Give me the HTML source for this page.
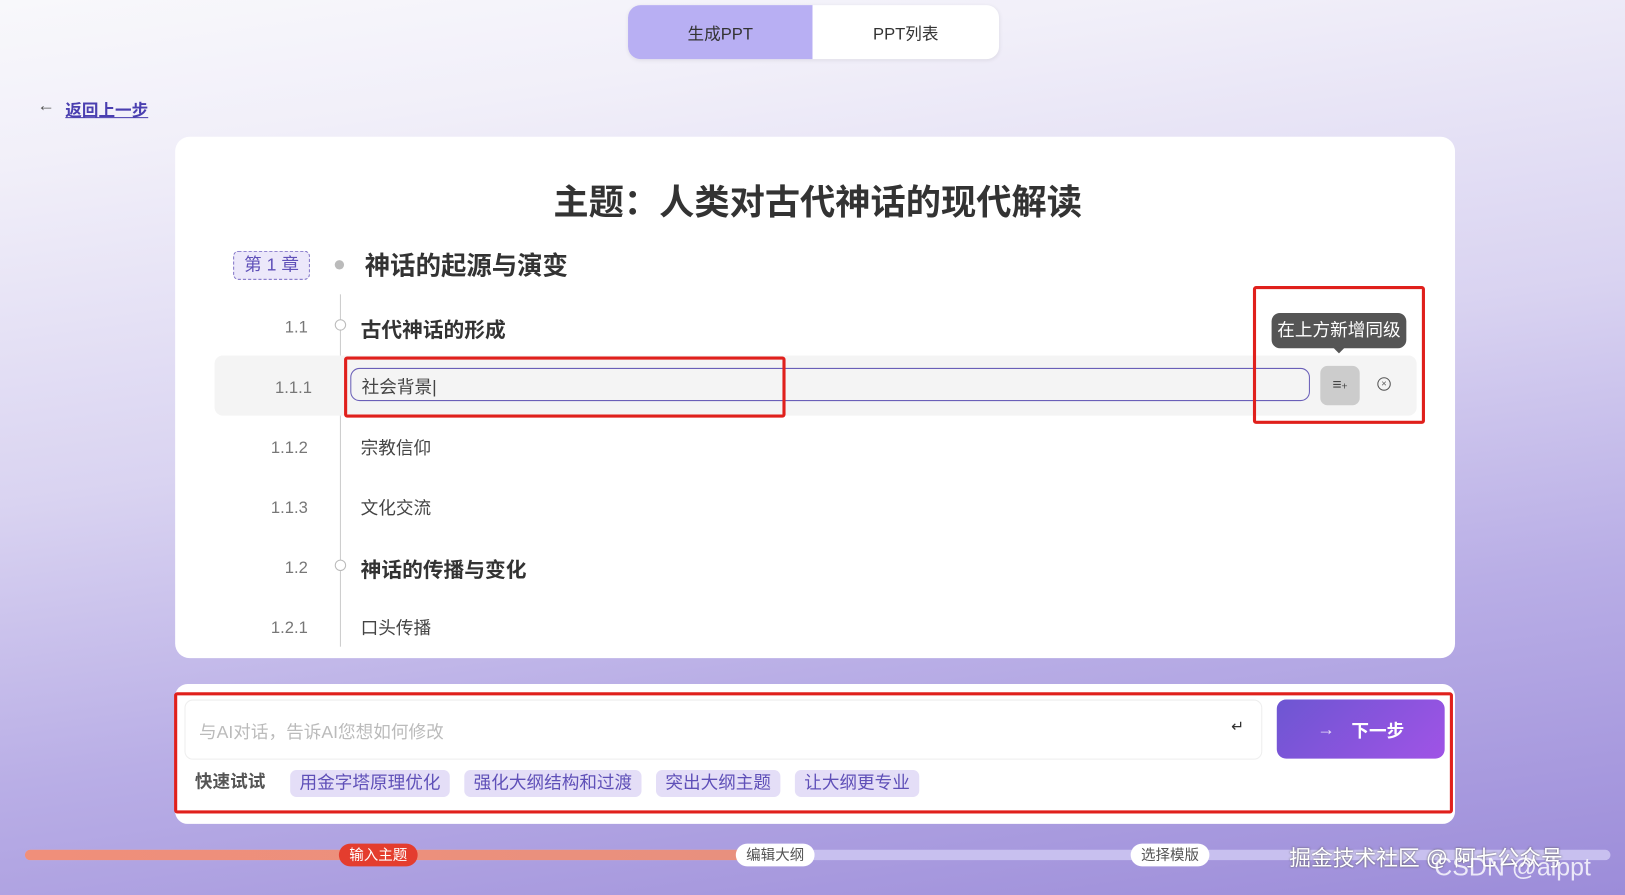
<!DOCTYPE html>
<html><head><meta charset="utf-8"><style>
html,body{margin:0;padding:0;width:1625px;height:895px;overflow:hidden}
body{font-family:"Liberation Sans","Noto Sans CJK SC",sans-serif;}
#w{position:absolute;left:0;top:0;width:1568px;height:864px;transform:scale(1.03635);transform-origin:0 0;
background:linear-gradient(172deg,#f8f8fb 0%,#f1eff9 15%,#d9d3f1 45%,#b9aee6 70%,#9c8cd9 100%);overflow:hidden;color:#333}
.a{position:absolute}
.tabs{left:606px;top:5px;width:358px;height:52px;background:#fff;border-radius:12px;box-shadow:0 1px 4px rgba(0,0,0,.08)}
.t1{left:0;top:0;width:178px;height:52px;background:#b8aff3;border-radius:12px 0 0 12px;display:flex;align-items:center;justify-content:center;font-size:16px;color:#333}
.t2{left:178px;top:0;width:180px;height:52px;display:flex;align-items:center;justify-content:center;font-size:16px;color:#333}
.card{left:169px;top:132px;width:1235px;height:503px;background:#fff;border-radius:14px;overflow:hidden}
.num{position:absolute;text-align:right;width:80px;font-size:16px;color:#777}
.txt{position:absolute;font-size:17px;color:#444}
.b{font-weight:bold;font-size:20px;color:#333}
.red{position:absolute;border:3px solid #e0201c;border-radius:3px}
.chip{display:inline-block;background:#e4def7;color:#5f50b8;border-radius:6px;padding:1px 9px;font-size:17px;margin-right:14px;line-height:24px}
</style></head><body><div id="w">
<div class="a tabs"><div class="a t1">生成PPT</div><div class="a t2">PPT列表</div></div>
<div class="a" style="left:36px;top:92px;font-size:17px;color:#555">←</div>
<div class="a" style="left:63px;top:93px;font-size:16px;color:#4a3fb0;text-decoration:underline;font-weight:bold">返回上一步</div>

<div class="a card">
 <div class="a" style="left:0;top:36px;width:1240px;text-align:center;font-size:34px;font-weight:bold;color:#333">主题：人类对古代神话的现代解读</div>
 <div class="a" style="left:56px;top:110px;width:72px;height:26px;border:1px dashed #7a6cc4;border-radius:5px;background:#ece8fa;color:#5f50b8;font-size:17px;text-align:center;line-height:26px">第 1 章</div>
 <div class="a" style="left:154px;top:119px;width:9px;height:9px;border-radius:50%;background:#bbb"></div>
 <div class="a" style="left:183px;top:106px;font-size:24.5px;font-weight:bold;color:#333">神话的起源与演变</div>
 <div class="a" style="left:159px;top:152px;width:1px;height:340px;background:#ccc"></div>
 <div class="a" style="left:38px;top:211px;width:1160px;height:58px;background:#f4f4f4;border-radius:8px"></div>
 <div class="num" style="left:48px;top:176px">1.1</div>
 <div class="a" style="left:154px;top:176px;width:9px;height:9px;border:1px solid #bbb;border-radius:50%;background:#fff"></div>
 <div class="txt b" style="left:179px;top:170px">古代神话的形成</div>
 <div class="num" style="left:52px;top:234px">1.1.1</div>
 <div class="a" style="left:169px;top:223px;width:924px;height:30px;border:1.5px solid #6a5fb8;border-radius:9px;background:#f4f4f4"></div>
 <div class="txt" style="left:180px;top:227px">社会背景|</div>
 <div class="a" style="left:1105px;top:221px;width:38px;height:38px;background:#ccc;border-radius:7px;font-size:15px;color:#444;text-align:center;line-height:38px">≡<span style="font-size:10px">+</span></div>
 <div class="a" style="left:1160px;top:232px;width:11px;height:11px;border:1.3px solid #555;border-radius:50%;font-size:9px;line-height:11px;text-align:center;color:#555">×</div>
 <div class="num" style="left:48px;top:292px">1.1.2</div>
 <div class="txt" style="left:179px;top:286px">宗教信仰</div>
 <div class="num" style="left:48px;top:350px">1.1.3</div>
 <div class="txt" style="left:179px;top:344px">文化交流</div>
 <div class="num" style="left:48px;top:408px">1.2</div>
 <div class="a" style="left:154px;top:408px;width:9px;height:9px;border:1px solid #bbb;border-radius:50%;background:#fff"></div>
 <div class="txt b" style="left:179px;top:402px">神话的传播与变化</div>
 <div class="num" style="left:48px;top:466px">1.2.1</div>
 <div class="txt" style="left:179px;top:460px">口头传播</div>
</div>
<div class="a" style="left:1227px;top:302px;width:130px;height:34px;background:#555;border-radius:8px;color:#fff;font-size:17px;text-align:center;line-height:34px">在上方新增同级</div>
<div class="a" style="left:1286px;top:335px;width:0;height:0;border-left:6px solid transparent;border-right:6px solid transparent;border-top:6px solid #555"></div>
<div class="red" style="left:1209px;top:276px;width:160px;height:127px"></div>
<div class="red" style="left:332px;top:344px;width:420px;height:53px"></div>

<div class="a" style="left:169px;top:660px;width:1235px;height:135px;background:#fff;border-radius:12px"></div>
<div class="a" style="left:178px;top:675px;width:1038px;height:56px;border:1px solid #eee;border-radius:8px;background:#fff"></div>
<div class="a" style="left:192px;top:692px;font-size:17px;color:#bbb">与AI对话，告诉AI您想如何修改</div>
<div class="a" style="left:1188px;top:692px;font-size:15px;color:#333">↵</div>
<div class="a" style="left:1232px;top:675px;width:162px;height:57px;border-radius:9px;background:linear-gradient(135deg,#6d56d2,#a053e6);color:#fff;font-size:17px;font-weight:bold;display:flex;align-items:center;justify-content:center"><span style="font-weight:normal;margin-right:16px;opacity:.8">→</span>下一步</div>
<div class="a" style="left:188px;top:743px;font-size:17px;font-weight:bold;color:#555;line-height:24px">快速试试</div>
<div class="a" style="left:280px;top:743px"><span class="chip">用金字塔原理优化</span><span class="chip">强化大纲结构和过渡</span><span class="chip">突出大纲主题</span><span class="chip">让大纲更专业</span></div>
<div class="red" style="left:168px;top:668px;width:1228px;height:111px"></div>

<div class="a" style="left:24px;top:820px;width:1530px;height:10px;border-radius:5px;background:#c8c0ef"></div>
<div class="a" style="left:24px;top:820px;width:700px;height:10px;border-radius:5px;background:linear-gradient(90deg,#f08f7a,#e8907e)"></div>
<div class="a" style="left:327px;top:814px;width:76px;height:22px;border-radius:11px;background:#e43d2e;color:#fff;font-size:14px;text-align:center;line-height:22px">输入主题</div>
<div class="a" style="left:710px;top:814px;width:76px;height:22px;border-radius:11px;background:#fff;color:#555;font-size:14px;text-align:center;line-height:22px">编辑大纲</div>
<div class="a" style="left:1091px;top:814px;width:76px;height:22px;border-radius:11px;background:#fff;color:#555;font-size:14px;text-align:center;line-height:22px">选择模版</div>
<div class="a" style="left:1244px;top:812px;font-size:21px;color:#fff;text-shadow:0 0 2px #555">掘金技术社区 @ 阿七公众号</div>
<div class="a" style="left:1384px;top:824px;font-size:24px;color:rgba(255,255,255,.8)">CSDN @aippt</div>
</div></body></html>
